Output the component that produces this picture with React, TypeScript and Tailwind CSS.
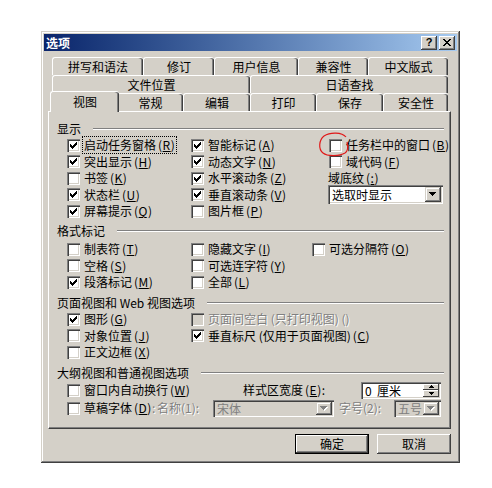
import React from "react";

type ItemProps = {
  checked?: boolean;
  disabled?: boolean;
  focus?: boolean;
  children: React.ReactNode;
};

// mnemonic letter in parens, underlined
function K({ c }: { c: string }) {
  return (
    <span className="ml-[2px] tracking-[0.5px]">
      (<u className="underline-offset-[1px]">{c}</u>)
    </span>
  );
}

function Box({ checked = false, disabled = false }: { checked?: boolean; disabled?: boolean }) {
  return (
    <span
      className={`relative block w-[13px] h-[13px] shrink-0 ${
        disabled ? "bg-[#d4d0c8]" : "bg-white"
      } [box-shadow:inset_1px_1px_#808080,inset_2px_2px_#404040,inset_-1px_-1px_#ffffff,inset_-2px_-2px_#d4d0c8]`}
    >
      {checked && (
        <svg width="13" height="13" viewBox="0 0 13 13" className="absolute inset-0" shapeRendering="crispEdges">
          {[5, 6, 7, 6, 5, 4, 3].map((y, i) => (
            <rect key={i} x={3 + i} y={y} width="1" height="3" fill="#000" />
          ))}
        </svg>
      )}
    </span>
  );
}

function Item({ checked, disabled, focus, children }: ItemProps) {
  return (
    <div className="flex items-center h-[16.5px]">
      <Box checked={checked} disabled={disabled} />
      <span
        className={`ml-[4px] whitespace-nowrap leading-[14px] ${
          disabled ? "text-[#808080] [text-shadow:1px_1px_0_#ffffff]" : ""
        } ${focus ? "outline-1 outline-dotted outline-black outline-offset-[1px]" : ""}`}
      >
        {children}
      </span>
    </div>
  );
}

function Group({ title }: { title: string }) {
  return (
    <div className="flex items-center h-4 pl-[8px] pr-[6px]">
      <span className="leading-4 whitespace-nowrap">{title}</span>
      <div className="flex-1 ml-[12px] h-[2px] border-t border-t-[#808080] border-b border-b-white" />
    </div>
  );
}

function Arrow({ disabled }: { disabled?: boolean }) {
  return (
    <svg width="8" height="5" viewBox="0 0 8 5" shapeRendering="crispEdges">
      {disabled && <path d="M1 1h7v1h-1v1h-1v1h-1v1h-1v-1h-1v-1h-1v-1h-1z" fill="#ffffff" />}
      <path d="M0 0h7v1h-1v1h-1v1h-1v1h-1v-1h-1v-1h-1v-1h-1z" fill={disabled ? "#808080" : "#000"} />
    </svg>
  );
}

function DropButton({ disabled }: { disabled?: boolean }) {
  return (
    <div className="w-[16px] h-full flex items-center justify-center bg-[#d4d0c8] [box-shadow:inset_-1px_-1px_#404040,inset_1px_1px_#d4d0c8,inset_-2px_-2px_#808080,inset_2px_2px_#ffffff]">
      <Arrow disabled={disabled} />
    </div>
  );
}

const sunken =
  "[box-shadow:inset_1px_1px_#808080,inset_2px_2px_#404040,inset_-1px_-1px_#ffffff,inset_-2px_-2px_#d4d0c8]";

export default function App() {
  const row1 = [
    ["拼写和语法", "w-[91px]"],
    ["修订", "w-[71px]"],
    ["用户信息", "w-[84px]"],
    ["兼容性", "w-[70px]"],
    ["中文版式", "w-[80px]"],
  ];
  const row3 = [
    ["常规", "w-[66px]"],
    ["编辑", "w-[67px]"],
    ["打印", "w-[66px]"],
    ["保存", "w-[67px]"],
    ["安全性", "w-[65px]"],
  ];
  const tab =
    "h-[18px] shrink-0 bg-[#d4d0c8] border-t border-l border-white rounded-t-[3px] text-center leading-[17px] [box-shadow:inset_-1px_0_#404040,inset_-2px_0_#808080]";

  return (
    <div className="w-[492px] h-[488px] bg-white pt-[31px] pl-[41px] font-['Noto_Sans_CJK_SC',sans-serif] text-[12px] text-black">
      <div className="w-[419px] h-[432px] bg-[#d4d0c8] p-[3px] [box-shadow:inset_-1px_-1px_#404040,inset_1px_1px_#d4d0c8,inset_-2px_-2px_#808080,inset_2px_2px_#ffffff]">
        {/* Title bar */}
        <div className="h-[17px] flex items-center justify-between pl-[2px] pr-[2px] bg-linear-to-r from-[#0a246a] to-[#a6caf0]">
          <span className="text-white font-bold leading-[17px]">选项</span>
          <div className="flex gap-[2px]">
            <div className="w-[16px] h-[14px] flex items-center justify-center bg-[#d4d0c8] font-['Liberation_Sans',sans-serif] font-bold text-[11px] leading-none [box-shadow:inset_-1px_-1px_#404040,inset_1px_1px_#ffffff,inset_-2px_-2px_#808080]">
              ?
            </div>
            <div className="w-[16px] h-[14px] flex items-center justify-center bg-[#d4d0c8] [box-shadow:inset_-1px_-1px_#404040,inset_1px_1px_#ffffff,inset_-2px_-2px_#808080]">
              <svg width="8" height="7" viewBox="0 0 8 7" shapeRendering="crispEdges">
                <path d="M0 0h2l2 2.5 2-2.5h2l-3 3.5 3 3.5h-2l-2-2.5-2 2.5h-2l3-3.5z" fill="#000" />
              </svg>
            </div>
          </div>
        </div>

        {/* Tabs */}
        <div className="mt-[6px] ml-[8px] w-[396px]">
          <div className="flex">
            {row1.map(([t, w]) => (
              <div key={t} className={`${tab} ${w}`}>{t}</div>
            ))}
          </div>
          <div className="flex">
            <div className={`${tab} w-[198px]`}>文件位置</div>
            <div className={`${tab} w-[198px]`}>日语查找</div>
          </div>
          <div className="flex items-end h-[18px]">
            <div className="relative z-10 h-[21px] w-[69px] -ml-[2px] -mr-[2px] -mb-[1px] shrink-0 bg-[#d4d0c8] border-t border-l border-white rounded-t-[3px] text-center leading-[19px] [box-shadow:inset_-1px_0_#404040,inset_-2px_0_#808080]">
              视图
            </div>
            {row3.map(([t, w]) => (
              <div key={t} className={`${tab} ${w}`}>{t}</div>
            ))}
          </div>
        </div>

        {/* Panel */}
        <div className="relative ml-[4px] w-[403px] h-[318px] border-l border-t border-white border-r border-b border-r-[#404040] border-b-[#404040] [box-shadow:inset_-1px_-1px_#808080] pt-[9px]">
          {/* 显示 */}
          <Group title="显示" />
          <div className="flex pl-[18px]">
            <div className="w-[124px] shrink-0">
              <Item checked focus>启动任务窗格<K c="R" /></Item>
              <Item checked>突出显示<K c="H" /></Item>
              <Item>书签<K c="K" /></Item>
              <Item checked>状态栏<K c="U" /></Item>
              <Item checked>屏幕提示<K c="Q" /></Item>
            </div>
            <div className="w-[138px] shrink-0">
              <Item checked>智能标记<K c="A" /></Item>
              <Item checked>动态文字<K c="N" /></Item>
              <Item checked>水平滚动条<K c="Z" /></Item>
              <Item checked>垂直滚动条<K c="V" /></Item>
              <Item>图片框<K c="P" /></Item>
            </div>
            <div className="flex-1">
              <Item>任务栏中的窗口<K c="B" /></Item>
              <Item>域代码<K c="F" /></Item>
              <div className="h-[15px] -ml-[1px] leading-[16px] whitespace-nowrap">
                域底纹<K c=":" />
              </div>
              <div className={`-ml-[1px] w-[115px] h-[19px] flex items-center justify-between bg-white p-[2px] ${sunken}`}>
                <span className="pl-[2px] leading-[15px]">选取时显示</span>
                <DropButton />
              </div>
            </div>
          </div>

          {/* 格式标记 */}
          <div className="mt-[3.5px]">
            <Group title="格式标记" />
            <div className="flex pl-[18px] mt-[2px]">
              <div className="w-[124px] shrink-0">
                <Item>制表符<K c="T" /></Item>
                <Item>空格<K c="S" /></Item>
                <Item checked>段落标记<K c="M" /></Item>
              </div>
              <div className="w-[121px] shrink-0">
                <Item>隐藏文字<K c="I" /></Item>
                <Item>可选连字符<K c="Y" /></Item>
                <Item>全部<K c="L" /></Item>
              </div>
              <div className="flex-1">
                <Item>可选分隔符<K c="O" /></Item>
              </div>
            </div>
          </div>

          {/* 页面视图和 Web 视图选项 */}
          <div className="mt-[4.5px]">
            <Group title="页面视图和 Web 视图选项" />
            <div className="flex pl-[18px]">
              <div className="w-[124px] shrink-0">
                <Item checked>图形<K c="G" /></Item>
                <Item>对象位置<K c="J" /></Item>
                <Item>正文边框<K c="X" /></Item>
              </div>
              <div className="flex-1">
                <Item disabled>页面间空白 (只打印视图) ()</Item>
                <Item checked>垂直标尺 (仅用于页面视图)<K c="C" /></Item>
              </div>
            </div>
          </div>

          {/* 大纲视图和普通视图选项 */}
          <div className="mt-[4.5px]">
            <Group title="大纲视图和普通视图选项" />
            <div className="pl-[18px]">
              <div className="flex items-center h-[18px]">
                <div className="w-[176px] shrink-0">
                  <Item>窗口内自动换行<K c="W" /></Item>
                </div>
                <span className="w-[118px] shrink-0 whitespace-nowrap">样式区宽度<K c="E" />:</span>
                <div className={`w-[80px] h-[17px] flex items-center justify-between bg-white p-[2px] ${sunken}`}>
                  <span className="pl-[2px] leading-[13px] whitespace-pre">0  厘米</span>
                  <div className="w-[16px] h-full flex flex-col">
                    <div className="flex-1 flex items-center justify-center bg-[#d4d0c8] [box-shadow:inset_-1px_-1px_#404040,inset_1px_1px_#ffffff]">
                      <svg width="5" height="3" viewBox="0 0 5 3" shapeRendering="crispEdges">
                        <path d="M2 0h1v1h1v1h1v1h-5v-1h1v-1h1z" fill="#000" />
                      </svg>
                    </div>
                    <div className="flex-1 flex items-center justify-center bg-[#d4d0c8] [box-shadow:inset_-1px_-1px_#404040,inset_1px_1px_#ffffff]">
                      <svg width="5" height="3" viewBox="0 0 5 3" shapeRendering="crispEdges">
                        <path d="M0 0h5v1h-1v1h-1v1h-1v-1h-1v-1h-1z" fill="#000" />
                      </svg>
                    </div>
                  </div>
                </div>
              </div>
              <div className="flex items-center h-[18px]">
                <div className="w-[90px] shrink-0">
                  <Item>草稿字体<K c="D" /><span className="text-[#808080] [text-shadow:1px_1px_0_#ffffff]">:</span></Item>
                </div>
                <span className="w-[56px] shrink-0 whitespace-nowrap text-[#808080] [text-shadow:1px_1px_0_#ffffff]">名称(1):</span>
                <div className={`w-[121px] h-[17px] flex items-center justify-between bg-[#d4d0c8] p-[2px] ${sunken}`}>
                  <span className="pl-[2px] leading-[13px] text-[#808080]">宋体</span>
                  <DropButton disabled />
                </div>
                <span className="ml-[5px] w-[55px] shrink-0 whitespace-nowrap text-[#808080] [text-shadow:1px_1px_0_#ffffff]">字号(2):</span>
                <div className={`w-[47px] h-[17px] flex items-center justify-between bg-[#d4d0c8] p-[2px] ${sunken}`}>
                  <span className="pl-[2px] leading-[13px] text-[#808080]">五号</span>
                  <DropButton disabled />
                </div>
              </div>
            </div>
          </div>

          {/* hand-drawn red circle */}
          <svg className="absolute left-[269px] top-[19px]" width="32" height="28" viewBox="0 0 32 28" fill="none">
            <path d="M28 6 C24 1, 12 1, 6 5 C1 9, 0 18, 5 22 C10 26, 22 25, 27 22 C30 20, 30 15, 29 11" stroke="#e01818" strokeWidth="1.2" />
          </svg>
        </div>

        {/* Buttons */}
        <div className="ml-[4px] w-[403px] mt-[5px] flex justify-end gap-[8px]">
          <div className="w-[74px] h-[20px] border border-black bg-[#d4d0c8] flex items-center justify-center leading-none [box-shadow:inset_-1px_-1px_#404040,inset_1px_1px_#ffffff,inset_-2px_-2px_#808080]">
            确定
          </div>
          <div className="w-[74px] h-[20px] bg-[#d4d0c8] flex items-center justify-center leading-none [box-shadow:inset_-1px_-1px_#404040,inset_1px_1px_#ffffff,inset_-2px_-2px_#808080,inset_2px_2px_#d4d0c8]">
            取消
          </div>
        </div>
      </div>
    </div>
  );
}
